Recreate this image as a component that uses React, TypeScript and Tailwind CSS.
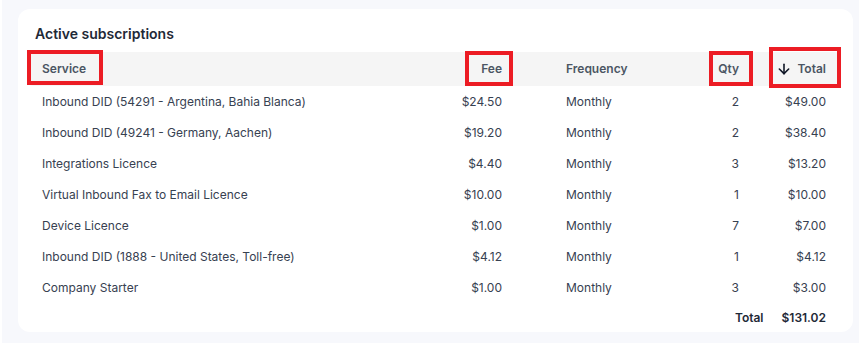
import { ArrowDown } from "lucide-react";

const rows = [
  { service: "Inbound DID (54291 - Argentina, Bahia Blanca)", fee: "$24.50", qty: 2, total: "$49.00" },
  { service: "Inbound DID (49241 - Germany, Aachen)", fee: "$19.20", qty: 2, total: "$38.40" },
  { service: "Integrations Licence", fee: "$4.40", qty: 3, total: "$13.20" },
  { service: "Virtual Inbound Fax to Email Licence", fee: "$10.00", qty: 1, total: "$10.00" },
  { service: "Device Licence", fee: "$1.00", qty: 7, total: "$7.00" },
  { service: "Inbound DID (1888 - United States, Toll-free)", fee: "$4.12", qty: 1, total: "$4.12" },
  { service: "Company Starter", fee: "$1.00", qty: 3, total: "$3.00" },
];

export default function App() {
  return (
    <div
      className="flex h-[343px] w-full overflow-hidden bg-[#f7f8fc]"
      style={{ fontFamily: "Inter, 'Noto Sans', sans-serif" }}
    >
      <div className="w-[2px] shrink-0 bg-white" />
      <div className="pl-[16px] pt-[9px]">
        <div className="w-[835px] rounded-xl bg-white pl-[9px] pr-[12px] pt-[15px]">
          <h2 className="pl-[8px] text-sm leading-5 font-semibold text-[#1f2937]">Active subscriptions</h2>

          <div className="mt-[8px] w-[814px] text-xs">
            {/* header */}
            <div className="relative flex h-[34px] items-center rounded-md bg-[#f5f5f5] font-semibold text-[#4b5563]">
              <div className="w-[393px] pl-[15px]">Service</div>
              <div className="w-[97px] pr-[15px] text-right">Fee</div>
              <div className="w-[163px] pl-[49px]">Frequency</div>
              <div className="w-[74px] pr-[15px] text-right">Qty</div>
              <div className="flex w-[87px] items-center justify-end gap-[5px] pr-[15px]">
                <ArrowDown size={16} strokeWidth={2.4} className="text-[#111827]" />
                Total
              </div>

              {/* annotation boxes */}
              <div className="absolute left-0 top-[-2px] h-[35px] w-[76px] border-[4px] border-[#ec1c24]" />
              <div className="absolute left-[438px] top-[-1px] h-[35px] w-[48px] border-[4px] border-[#ec1c24]" />
              <div className="absolute left-[682px] top-[-1px] h-[35px] w-[44px] border-[4px] border-[#ec1c24]" />
              <div className="absolute left-[742px] top-[-5px] h-[41px] w-[72px] border-[4px] border-[#ec1c24]" />
            </div>

            {rows.map((r) => (
              <div key={r.service} className="flex h-[31px] items-center text-[#374151]">
                <div className="w-[393px] pl-[15px]">{r.service}</div>
                <div className="w-[97px] pr-[15px] text-right">{r.fee}</div>
                <div className="w-[163px] pl-[49px]">Monthly</div>
                <div className="w-[74px] pr-[15px] text-right">{r.qty}</div>
                <div className="w-[87px] pr-[15px] text-right">{r.total}</div>
              </div>
            ))}

            <div className="flex h-[29px] items-center justify-end gap-[18px] pr-[15px] font-semibold text-[#1f2937]">
              <span>Total</span>
              <span>$131.02</span>
            </div>
          </div>
        </div>
      </div>
    </div>
  );
}
